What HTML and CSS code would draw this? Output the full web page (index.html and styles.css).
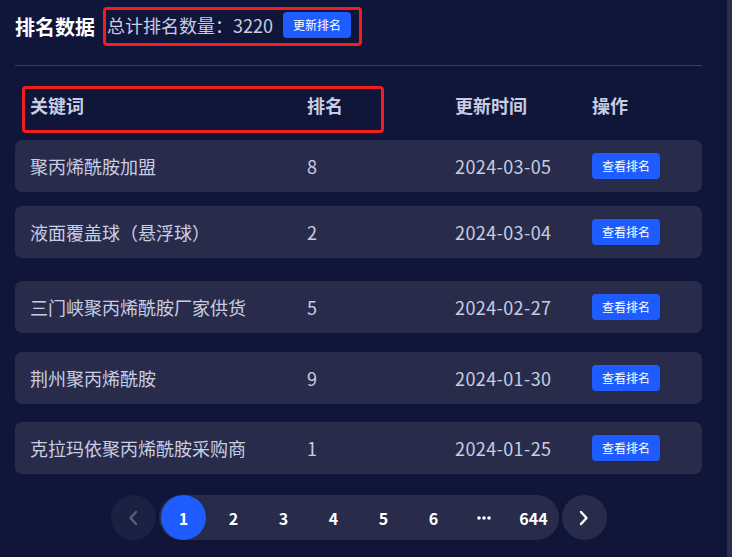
FILE: index.html
```html
<!DOCTYPE html>
<html lang="zh-CN">
<head>
<meta charset="utf-8">
<title>排名数据</title>
<link rel="stylesheet" href="styles.css">
</head>
<body>
<div class="page">
  <main class="main">
    <header class="top">
      <h1 class="title">排名数据</h1>
      <div class="total-box">
        <span class="total">总计排名数量：3220</span>
        <button class="btn">更新排名</button>
      </div>
    </header>
    <div class="divider"></div>
    <div class="thead">
      <span>关键词</span>
      <span>排名</span>
      <span>更新时间</span>
      <span>操作</span>
      <div class="mark"></div>
    </div>
    <div class="row">
      <span>聚丙烯酰胺加盟</span><span>8</span><span class="date">2024-03-05</span><span><button class="btn">查看排名</button></span>
    </div>
    <div class="row gap-a">
      <span>液面覆盖球（悬浮球）</span><span>2</span><span class="date">2024-03-04</span><span><button class="btn">查看排名</button></span>
    </div>
    <div class="row gap-b">
      <span>三门峡聚丙烯酰胺厂家供货</span><span>5</span><span class="date">2024-02-27</span><span><button class="btn">查看排名</button></span>
    </div>
    <div class="row gap-c">
      <span>荆州聚丙烯酰胺</span><span>9</span><span class="date">2024-01-30</span><span><button class="btn">查看排名</button></span>
    </div>
    <div class="row gap-d">
      <span>克拉玛依聚丙烯酰胺采购商</span><span>1</span><span class="date">2024-01-25</span><span><button class="btn">查看排名</button></span>
    </div>
    <nav class="pager">
      <button class="nav-btn prev" aria-label="上一页">
        <svg width="10" height="16" viewBox="0 0 10 16"><path d="M8 2 L2.5 8 L8 14" fill="none" stroke="currentColor" stroke-width="2.4" stroke-linecap="round" stroke-linejoin="round"/></svg>
      </button>
      <div class="pages">
        <span class="pg active"><span class="dot">1</span></span>
        <span class="pg">2</span>
        <span class="pg">3</span>
        <span class="pg">4</span>
        <span class="pg">5</span>
        <span class="pg">6</span>
        <span class="pg"><svg width="14" height="4" viewBox="0 0 14 4"><circle cx="2" cy="2" r="1.8" fill="#fff"/><circle cx="7" cy="2" r="1.8" fill="#fff"/><circle cx="12" cy="2" r="1.8" fill="#fff"/></svg></span>
        <span class="pg">644</span>
      </div>
      <button class="nav-btn next" aria-label="下一页">
        <svg width="10" height="16" viewBox="0 0 10 16"><path d="M2 2 L7.5 8 L2 14" fill="none" stroke="currentColor" stroke-width="2.4" stroke-linecap="round" stroke-linejoin="round"/></svg>
      </button>
    </nav>
  </main>
  <div class="scrollbar"></div>
</div>
</body>
</html>
```
FILE: styles.css
```css
* { box-sizing: border-box; }
html, body { margin: 0; padding: 0; }
body {
  background: #10163a;
  font-family: "Noto Sans CJK SC", "Noto Sans", sans-serif;
  color: #c8cde2;
  width: 732px;
  height: 557px;
  overflow: hidden;
}
.page { display: flex; height: 557px; }
.main { flex: 1; padding: 7px 25px 0 15px; }
.scrollbar { width: 5px; background: #282d4d; }

.top { display: flex; align-items: center; }
.title {
  margin: 0 8px 0 0;
  width: 80px;
  font-size: 20px;
  font-weight: 700;
  color: #ffffff;
  line-height: 39px;
  white-space: nowrap;
}
.total-box {
  display: flex;
  align-items: center;
  height: 39px;
  border: 3px solid #f41d1d;
  border-radius: 4px;
  padding: 0 8px 4px 1px;
}
.total { font-size: 18px; line-height: 28px; color: #c8cde2; margin-right: 10px; }
.btn {
  border: 0;
  background: #1f5cff;
  color: #fff;
  font-family: inherit;
  font-size: 12px;
  width: 68px;
  height: 26px;
  border-radius: 4px;
  padding: 0;
  line-height: 26px;
}

.divider { height: 1px; background: #383d5e; margin-top: 19px; }

.thead, .row {
  display: grid;
  grid-template-columns: 277px 148px 137px 1fr;
  padding-left: 15px;
  align-items: center;
}
.thead {
  position: relative;
  padding-top: 27px;
  padding-bottom: 23px;
  font-size: 18px;
  font-weight: 700;
  line-height: 24px;
}
.mark {
  position: absolute;
  left: 7px;
  top: 20px;
  width: 362px;
  height: 47px;
  border: 3px solid #f41d1d;
  border-radius: 4px;
}
.row {
  height: 52px;
  background: #282c4a;
  border-radius: 7px;
  font-size: 18px;
  line-height: 24px;
  white-space: nowrap;
}
.date { letter-spacing: 0.4px; }
.row .btn { display: block; }
.gap-a { margin-top: 14px; }
.gap-b { margin-top: 23px; }
.gap-c { margin-top: 19px; }
.gap-d { margin-top: 18px; }

.pager {
  display: flex;
  justify-content: center;
  gap: 3px;
  margin-top: 21px;
}
.nav-btn {
  width: 45px;
  height: 45px;
  border: 0;
  border-radius: 50%;
  padding: 0;
  display: flex;
  align-items: center;
  justify-content: center;
}
.prev { background: #1b2143; color: #5a5f7d; }
.next { background: #282c4a; color: #ffffff; }
.pages {
  display: flex;
  height: 45px;
  background: #282c4a;
  border-radius: 23px;
}
.pg {
  width: 50px;
  height: 45px;
  display: flex;
  align-items: center;
  justify-content: center;
  font-size: 16px;
  font-weight: 700;
  color: #ffffff;
}
.dot {
  width: 45px;
  height: 45px;
  border-radius: 50%;
  background: #1f5cff;
  display: flex;
  align-items: center;
  justify-content: center;
}
```
